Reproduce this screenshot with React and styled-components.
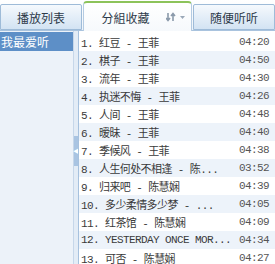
import styled, { createGlobalStyle } from "styled-components";

const GlobalStyle = createGlobalStyle`
  html, body {
    margin: 0;
    padding: 0;
    background: #ffffff;
  }
  body {
    font-family: "Noto Sans CJK SC", "Liberation Sans", sans-serif;
  }
`;

const songs = [
  { title: "1. 红豆 - 王菲", time: "04:20" },
  { title: "2. 棋子 - 王菲", time: "04:50" },
  { title: "3. 流年 - 王菲", time: "04:30" },
  { title: "4. 执迷不悔 - 王菲", time: "04:26" },
  { title: "5. 人间 - 王菲", time: "04:48" },
  { title: "6. 暧昧 - 王菲", time: "04:40" },
  { title: "7. 季候风 - 王菲", time: "04:38" },
  { title: "8. 人生何处不相逢 - 陈...", time: "03:52" },
  { title: "9. 归来吧 - 陈慧娴", time: "04:39" },
  { title: "10. 多少柔情多少梦 - ...", time: "04:05" },
  { title: "11. 红茶馆 - 陈慧娴", time: "04:09" },
  { title: "12. YESTERDAY ONCE MOR...", time: "04:34" },
  { title: "13. 可否 - 陈慧娴", time: "04:27" },
];

const Frame = styled.div`
  width: 275px;
  height: 264px;
  display: flex;
  flex-direction: column;
  overflow: hidden;
  background: #ffffff;
`;

const TabBar = styled.div`
  height: 31px;
  flex: none;
  display: flex;
  align-items: flex-end;
  gap: 1px;
  background: linear-gradient(#ffffff, #eef4fa);
  border-bottom: 1px solid #a9c3de;
  box-sizing: border-box;
`;

const Tab = styled.div`
  width: ${(p) => p.$width || "auto"};
  flex: ${(p) => (p.$grow ? 1 : "none")};
  height: ${(p) => (p.$active ? "30px" : "26px")};
  margin-bottom: ${(p) => (p.$active ? "-1px" : "0")};
  box-sizing: border-box;
  display: flex;
  align-items: center;
  justify-content: center;
  gap: 16px;
  font-size: 12px;
  color: #2d3a4a;
  border: 1px solid ${(p) => (p.$active ? "#b4cbe2" : "#9ebbd8")};
  border-top: ${(p) => (p.$active ? "2px solid #8cc35a" : "1px solid #9ebbd8")};
  border-bottom: ${(p) => (p.$active ? "none" : "1px solid #9ebbd8")};
  border-radius: ${(p) => (p.$active ? "4px 4px 0 0" : "2px 2px 0 0")};
  background: ${(p) =>
    p.$active
      ? "linear-gradient(#ffffff, #f6f9fc)"
      : "linear-gradient(#f5f9fd, #d3e3f3)"};
  padding-top: ${(p) => (p.$active ? "0" : "1px")};
`;

const Body = styled.div`
  flex: 1;
  display: flex;
  min-height: 0;
`;

const SidePanel = styled.div`
  width: 73px;
  flex: none;
  background: #ecf2f9;
  padding-top: 1px;
`;

const SideItem = styled.div`
  height: 19px;
  line-height: 19px;
  padding-left: 1px;
  font-size: 12px;
  color: ${(p) => (p.$selected ? "#ffffff" : "#2d3a4a")};
  background: ${(p) => (p.$selected ? "#5d8fc7" : "transparent")};
`;

const Splitter = styled.div`
  width: 5px;
  flex: none;
  display: flex;
  align-items: center;
  background: #e3ecf6;
  border-left: 1px solid #c6d7ea;
  box-sizing: border-box;
`;

const Handle = styled.div`
  width: 4px;
  height: 30px;
  display: flex;
  align-items: center;
  justify-content: center;
  background: #a9c4e2;
  color: #ffffff;
  font-size: 6px;
  margin-top: 6px;
`;

const List = styled.div`
  flex: 1;
  border-left: 1px solid #a6c1de;
  padding-top: 2px;
  overflow: hidden;
`;

const Row = styled.div`
  height: 18px;
  display: flex;
  align-items: center;
  justify-content: space-between;
  padding: 0 6px 0 2px;
  font-size: 12px;
  color: #3a3a3a;
  background: ${(p) => (p.$striped ? "#edf3fa" : "#ffffff")};
`;

const Title = styled.span`
  white-space: nowrap;
  font-family: "Liberation Mono", "Noto Sans CJK SC", monospace;
  letter-spacing: -0.6px;
  font-size: 11px;
`;

const Time = styled.span`
  font-family: "Liberation Mono", monospace;
  font-size: 11px;
  letter-spacing: -0.6px;
  color: #555555;
`;

function SortIcon() {
  return (
    <svg width="20" height="10" viewBox="0 0 20 10">
      <path d="M2 1v7M0 6l2 2.5L4 6" stroke="#8b9aab" strokeWidth="1.6" fill="none" />
      <path d="M7 9V2M5 4l2-2.5L9 4" stroke="#8b9aab" strokeWidth="1.6" fill="none" />
      <path d="M14 4h5l-2.5 3z" fill="#9aa8b8" />
    </svg>
  );
}

export default function App() {
  return (
    <>
      <GlobalStyle />
      <Frame>
        <TabBar>
          <Tab $width="82px">播放列表</Tab>
          <Tab $width="109px" $active>
            <span style={{ marginLeft: 12 }}>分組收藏</span>
            <SortIcon />
          </Tab>
          <Tab $grow>随便听听</Tab>
        </TabBar>
        <Body>
          <SidePanel>
            <SideItem $selected>我最爱听</SideItem>
          </SidePanel>
          <Splitter>
            <Handle>◀</Handle>
          </Splitter>
          <List>
            {songs.map((s, i) => (
              <Row key={s.title} $striped={i % 2 === 1}>
                <Title>{s.title}</Title>
                <Time>{s.time}</Time>
              </Row>
            ))}
          </List>
        </Body>
      </Frame>
    </>
  );
}
